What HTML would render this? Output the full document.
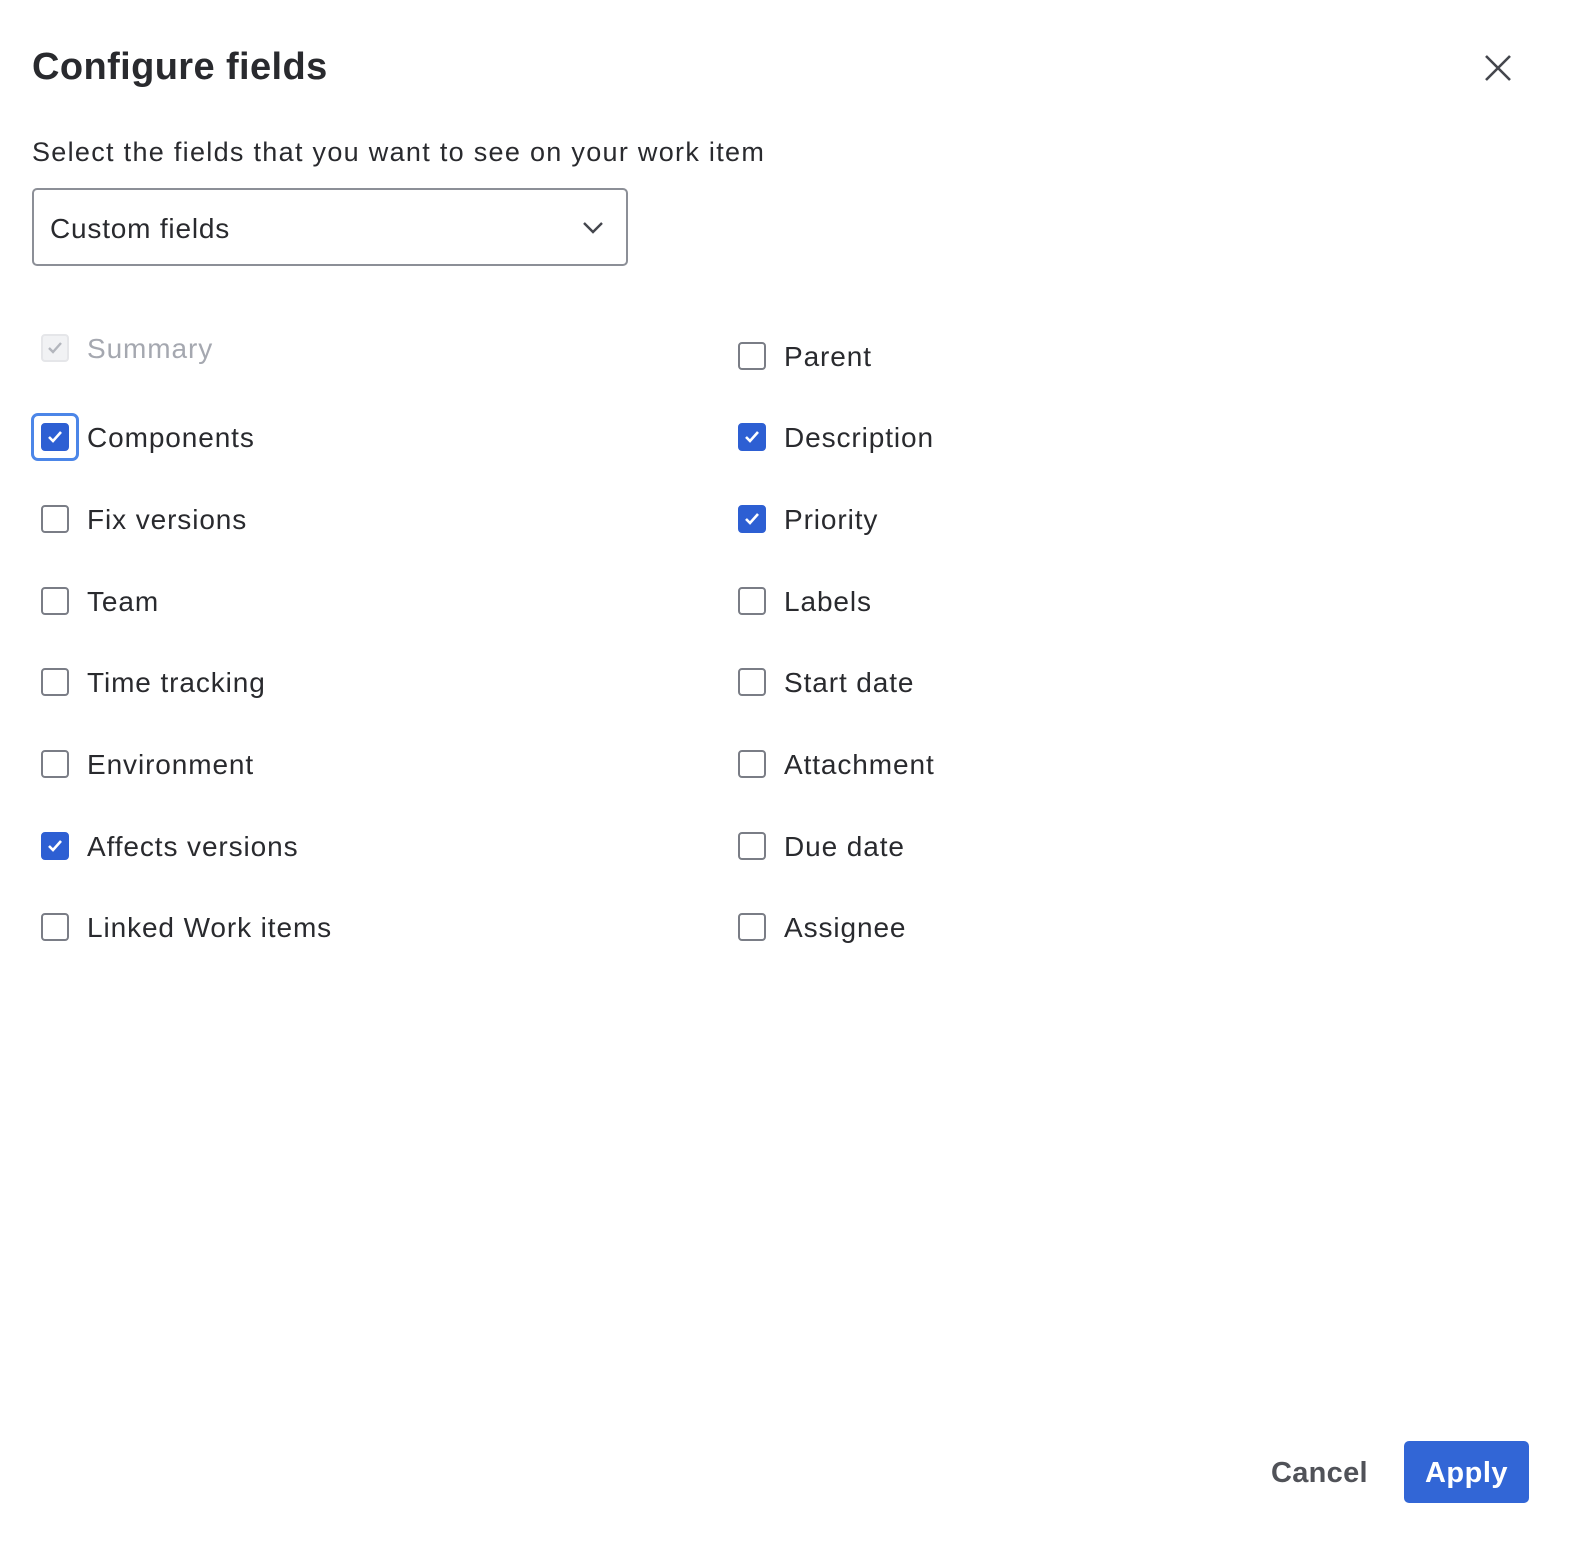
<!DOCTYPE html>
<html><head><style>
*{margin:0;padding:0;box-sizing:border-box}
body{width:1574px;height:1542px;background:#fff;font-family:"Liberation Sans",sans-serif;color:#172b4d;position:relative;overflow:hidden}
.a{position:absolute;white-space:nowrap}
h1{position:absolute;left:32px;top:46px;font-size:38px;font-weight:bold;color:#292a2e;letter-spacing:0.4px}
.sub{left:32px;top:137px;font-size:27px;color:#292a2e;letter-spacing:1.3px}
.dd{position:absolute;left:32px;top:188px;width:596px;height:78px;border:2px solid #8c8f97;border-radius:5px}
.dd span{position:absolute;left:16px;top:23px;font-size:28px;color:#292a2e;letter-spacing:0.8px}
.cb{position:absolute;width:28px;height:28px;border:2px solid #7a7d86;border-radius:4px;background:#fff}
.cb.on{background:#2d5fd3;border-color:#2d5fd3}
.cb.dis{background:#f1f2f4;border-color:#e5e6e9}
.cb svg{position:absolute;left:2px;top:2px}
.lb{position:absolute;font-size:28px;color:#292a2e;white-space:nowrap;letter-spacing:0.9px;margin-top:3px}
.btn{position:absolute;left:1404px;top:1441px;width:125px;height:62px;background:#3266d6;border-radius:5px;color:#fff;font-size:29px;font-weight:bold;text-align:center;line-height:64px;letter-spacing:0.5px}
</style></head><body>
<h1>Configure fields</h1>
<svg class="a" style="left:1485px;top:55px" width="26" height="26" viewBox="0 0 26 26"><path d="M1 1L25 25M25 1L1 25" stroke="#44464d" stroke-width="2.6"/></svg>
<div class="a sub">Select the fields that you want to see on your work item</div>
<div class="dd"><span>Custom fields</span>
<svg style="position:absolute;left:548px;top:31px" width="22" height="14" viewBox="0 0 22 14"><path d="M2 2L11 11L20 2" stroke="#44464d" stroke-width="2.4" fill="none"/></svg></div>

<div class="cb dis" style="left:41px;top:334px"><svg width="20" height="20" viewBox="0 0 20 20"><path d="M4 10L8 14L16 5" stroke="#b3b6bd" stroke-width="2.4" fill="none"/></svg></div>
<div class="lb" style="left:87px;top:330px;color:#a5a8b0">Summary</div>

<div class="a" style="left:31px;top:413px;width:48px;height:48px;border:3px solid #4c86e8;border-radius:7px"></div>
<div class="cb on" style="left:41px;top:423px"><svg width="20" height="20" viewBox="0 0 20 20"><path d="M4 10L8 14L16 5" stroke="#fff" stroke-width="2.6" fill="none"/></svg></div>
<div class="lb" style="left:87px;top:419px">Components</div>

<div class="cb" style="left:41px;top:505px"></div><div class="lb" style="left:87px;top:501px">Fix versions</div>
<div class="cb" style="left:41px;top:587px"></div><div class="lb" style="left:87px;top:583px">Team</div>
<div class="cb" style="left:41px;top:668px"></div><div class="lb" style="left:87px;top:664px">Time tracking</div>
<div class="cb" style="left:41px;top:750px"></div><div class="lb" style="left:87px;top:746px">Environment</div>
<div class="cb on" style="left:41px;top:832px"><svg width="20" height="20" viewBox="0 0 20 20"><path d="M4 10L8 14L16 5" stroke="#fff" stroke-width="2.6" fill="none"/></svg></div><div class="lb" style="left:87px;top:828px">Affects versions</div>
<div class="cb" style="left:41px;top:913px"></div><div class="lb" style="left:87px;top:909px">Linked Work items</div>

<div class="cb" style="left:738px;top:342px"></div><div class="lb" style="left:784px;top:338px">Parent</div>
<div class="cb on" style="left:738px;top:423px"><svg width="20" height="20" viewBox="0 0 20 20"><path d="M4 10L8 14L16 5" stroke="#fff" stroke-width="2.6" fill="none"/></svg></div><div class="lb" style="left:784px;top:419px">Description</div>
<div class="cb on" style="left:738px;top:505px"><svg width="20" height="20" viewBox="0 0 20 20"><path d="M4 10L8 14L16 5" stroke="#fff" stroke-width="2.6" fill="none"/></svg></div><div class="lb" style="left:784px;top:501px">Priority</div>
<div class="cb" style="left:738px;top:587px"></div><div class="lb" style="left:784px;top:583px">Labels</div>
<div class="cb" style="left:738px;top:668px"></div><div class="lb" style="left:784px;top:664px">Start date</div>
<div class="cb" style="left:738px;top:750px"></div><div class="lb" style="left:784px;top:746px">Attachment</div>
<div class="cb" style="left:738px;top:832px"></div><div class="lb" style="left:784px;top:828px">Due date</div>
<div class="cb" style="left:738px;top:913px"></div><div class="lb" style="left:784px;top:909px">Assignee</div>

<div class="a" style="left:1271px;top:1457px;font-size:29px;font-weight:bold;color:#505258;letter-spacing:0.3px">Cancel</div>
<div class="btn">Apply</div>
</body></html>
